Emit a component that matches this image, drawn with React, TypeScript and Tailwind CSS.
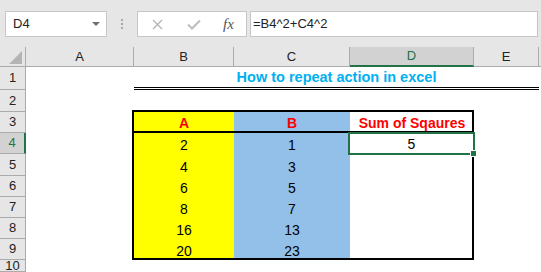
const rowHeights = [23, 22, 21, 21, 22, 21, 21, 21, 21, 12];

const columns = ["A", "B", "C", "D", "E"];

const colStart = ["col-start-2", "col-start-3", "col-start-4", "col-start-5", "col-start-6"];
const rowStart = [
  "row-start-2",
  "row-start-3",
  "row-start-4",
  "row-start-5",
  "row-start-6",
  "row-start-7",
  "row-start-8",
  "row-start-9",
  "row-start-10",
  "row-start-11",
];

const data = [
  ["2", "1"],
  ["4", "3"],
  ["6", "5"],
  ["8", "7"],
  ["16", "13"],
  ["20", "23"],
];

const FormulaBar = () => (
  <div className="flex h-[47px] items-start bg-[#e6e6e6] pl-[5px] pt-[11px]">
    <div className="flex h-[26px] w-[102px] items-center justify-between border border-[#c6c6c6] bg-white pl-[7px] pr-[6px] text-[13px] text-[#222]">
      <span>D4</span>
      <svg width="8" height="5" viewBox="0 0 8 5">
        <polygon points="0,0 8,0 4,4" fill="#707070" />
      </svg>
    </div>
    <div className="flex h-[26px] w-[30px] flex-col items-center justify-center gap-[2px]">
      <span className="h-[2px] w-[2px] bg-[#a6a6a6]" />
      <span className="h-[2px] w-[2px] bg-[#a6a6a6]" />
      <span className="h-[2px] w-[2px] bg-[#a6a6a6]" />
    </div>
    <div className="flex h-[26px] w-[110px] items-center border border-[#c6c6c6] bg-white pl-[14px]">
      <svg width="11" height="11" viewBox="0 0 11 11">
        <path d="M1 1 L10 10 M10 1 L1 10" stroke="#b4b4b4" strokeWidth="1.3" fill="none" />
      </svg>
      <svg width="14" height="11" viewBox="0 0 14 11" className="ml-[24px]">
        <path d="M1 5.5 L5 9.5 L13 1.5" stroke="#bdbdbd" strokeWidth="2" fill="none" />
      </svg>
      <span className="ml-[22px] font-['Liberation_Serif',serif] text-[15px] italic leading-none text-[#555]">
        fx
      </span>
    </div>
    <div className="ml-[3px] flex h-[26px] w-[288px] items-center border border-[#c6c6c6] bg-white pl-[2px] text-[13px] text-[#222]">
      =B4^2+C4^2
    </div>
  </div>
);

export default function App() {
  return (
    <div className="h-[272px] w-[541px] overflow-hidden bg-white font-['Liberation_Sans',Arial,sans-serif]">
      <FormulaBar />
      <div className="grid grid-cols-[26px_108px_100px_116px_124px_65px_1fr] grid-rows-[20px_23px_22px_21px_21px_22px_21px_21px_21px_21px_12px]">
        {/* corner */}
        <div className="col-start-1 row-start-1 flex items-end justify-end border-b border-r border-[#ababab] bg-[#e6e6e6] pb-[2px] pr-[3px]">
          <svg width="13" height="13" viewBox="0 0 13 13">
            <polygon points="13,0 13,13 0,13" fill="#b4b4b4" />
          </svg>
        </div>

        {/* column headers */}
        {columns.map((c, i) => (
          <div
            key={c}
            className={`${colStart[i]} row-start-1 flex items-center justify-center border-r border-[#ababab] text-[13px] ${
              c === "D"
                ? "border-b-2 border-b-[#217346] bg-[#d2d2d2] text-[#217346]"
                : "border-b bg-[#e6e6e6] text-[#222]"
            }`}
          >
            {c}
          </div>
        ))}
        <div className="col-start-7 row-start-1 border-b border-[#ababab] bg-[#e6e6e6]" />

        {/* row headers */}
        {rowHeights.map((_, i) => (
          <div
            key={i}
            className={`col-start-1 ${rowStart[i]} flex items-center justify-center border-b border-[#ababab] text-[13px] ${
              i === 3
                ? "border-r-2 border-r-[#217346] bg-[#d2d2d2] text-[#217346]"
                : "border-r bg-[#e6e6e6] text-[#222]"
            }`}
          >
            {i + 1}
          </div>
        ))}

        {/* title */}
        <div className="col-start-3 col-span-4 row-start-2 flex items-end justify-center border-b-[3px] border-double border-black pb-[2px] text-[14.5px] font-bold leading-[16px] text-[#00b0f0]">
          How to repeat action in excel
        </div>

        {/* column fills */}
        <div className="col-start-3 row-start-4 row-span-7 bg-[#ffff00]" />
        <div className="col-start-4 row-start-4 row-span-7 bg-[#92c0e9]" />

        {/* table header row */}
        <div className="col-start-3 col-span-3 row-start-4 border-b-2 border-black" />
        <div className="col-start-3 row-start-4 flex items-end justify-center pb-[2px] text-[14px] font-bold leading-[16px] text-[#ff0000]">
          A
        </div>
        <div className="col-start-4 row-start-4 flex items-end justify-center pb-[2px] text-[14px] font-bold leading-[16px] text-[#ff0000]">
          B
        </div>
        <div className="col-start-5 row-start-4 flex items-end justify-center pb-[2px] text-[14px] font-bold leading-[16px] text-[#ff0000]">
          Sum of Sqaures
        </div>

        {/* values */}
        {data.map((row, r) =>
          row.map((v, c) => (
            <div
              key={`${r}-${c}`}
              className={`${colStart[c + 1]} ${rowStart[r + 3]} flex items-end justify-center pb-[1px] text-[14px] leading-[16px] text-black`}
            >
              {v}
            </div>
          ))
        )}

        {/* outside border */}
        <div className="col-start-3 col-span-3 row-start-4 row-span-7 -ml-[2px] -mt-[2px] border-2 border-black" />

        {/* selected cell D4 */}
        <div className="relative col-start-5 row-start-5 -mb-[1px] -ml-[2px] -mr-[1px] -mt-[1px] flex items-end justify-center border-2 border-[#217346] bg-white pb-[1px] text-[14px] leading-[16px] text-black">
          5
          <span className="absolute -bottom-[4px] -right-[4px] h-[7px] w-[7px] border border-white bg-[#217346]" />
        </div>
      </div>
    </div>
  );
}
